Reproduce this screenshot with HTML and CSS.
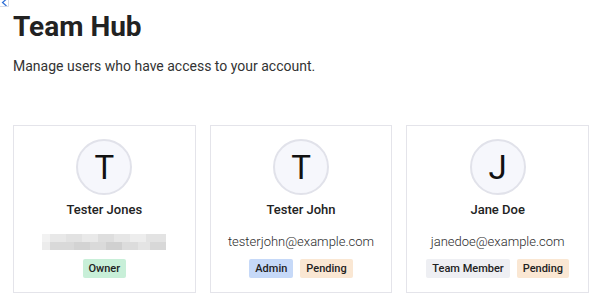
FILE: index.html
```html
<!DOCTYPE html>
<html lang="en">
<head>
  <meta charset="UTF-8">
  <meta name="viewport" content="width=device-width, initial-scale=1.0">
  <title>Team Hub</title>
  <link rel="stylesheet" href="styles.css">
</head>
<body>
  <!-- corner of a broken image, mostly scrolled out of view -->
  <svg class="corner-icon" width="10" height="7" viewBox="0 0 10 7" aria-hidden="true">
    <path d="M6.5 -1 L2.5 2.5 L6.5 6" fill="none" stroke="#2f6fd6" stroke-width="1.2"/>
    <path d="M0 6.5 H8.5 V0" fill="none" stroke="#d6dbe6" stroke-width="1"/>
  </svg>

  <div class="page">
    <h1>Team Hub</h1>
    <p class="subtitle">Manage users who have access to your account.</p>

    <div class="members">
      <!-- Owner -->
      <div class="member-card">
        <div class="avatar">T</div>
        <div class="member-name">Tester Jones</div>
        <div class="member-email blurred" aria-label="hidden email"></div>
        <div class="badges">
          <span class="badge badge-owner">Owner</span>
        </div>
      </div>

      <div class="member-card">
        <div class="avatar">T</div>
        <div class="member-name">Tester John</div>
        <div class="member-email">testerjohn@example.com</div>
        <div class="badges">
          <span class="badge badge-admin">Admin</span>
          <span class="badge badge-pending">Pending</span>
        </div>
      </div>

      <div class="member-card">
        <div class="avatar">J</div>
        <div class="member-name">Jane Doe</div>
        <div class="member-email">janedoe@example.com</div>
        <div class="badges">
          <span class="badge badge-member">Team Member</span>
          <span class="badge badge-pending">Pending</span>
        </div>
      </div>
    </div>
  </div>
</body>
</html>
```

FILE: styles.css
```css
body {
  font-family: Roboto, "Liberation Sans", sans-serif;
  margin: 0;
  padding: 0;
  background-color: #fff;
  color: #222;
}

.corner-icon {
  position: absolute;
  top: 0;
  left: 0;
}

.page {
  padding: 10px 11px 0 13px;
}

h1 {
  margin: 0;
  font-size: 28px;
  line-height: 34px;
  font-weight: 700;
  color: #222;
}

.subtitle {
  margin: 12px 0 0;
  font-size: 14px;
  line-height: 20px;
  color: #333;
}

.members {
  display: grid;
  grid-template-columns: repeat(3, 1fr);
  gap: 14px;
  margin-top: 49px;
}

.member-card {
  display: flex;
  flex-direction: column;
  align-items: center;
  border: 1px solid #e4e4ea;
  padding: 13px 8px 14px;
}

.avatar {
  width: 52px;
  height: 52px;
  border: 2px solid #e1e2ea;
  border-radius: 50%;
  background-color: #f6f7fc;
  display: flex;
  align-items: center;
  justify-content: center;
  font-size: 33px;
  color: #111;
}

.member-name {
  margin-top: 7px;
  font-size: 13px;
  line-height: 16px;
  font-weight: 500;
  color: #222;
}

.member-email {
  margin-top: 14px;
  font-size: 13px;
  line-height: 20px;
  font-weight: 300;
  color: #2a2a2a;
}

.blurred {
  width: 124px;
  height: 16px;
  margin-top: 16px;
  margin-bottom: 2px;
  background:
    linear-gradient(90deg, #f2f2f2 0 8px, #e8e8e8 8px 24px, #e2e2e2 24px 40px, #e9e9e9 40px 56px, #dedede 56px 72px, #e6e6e6 72px 88px, #ededed 88px 104px, #e3e3e3 104px 124px) top / 124px 8px no-repeat,
    linear-gradient(90deg, #ececec 0 8px, #d9d9d9 8px 32px, #d3d3d3 32px 48px, #dadada 48px 64px, #d0d0d0 64px 80px, #dcdcdc 80px 96px, #e4e4e4 96px 108px, #d8d8d8 108px 124px) bottom / 124px 8px no-repeat;
}

.badges {
  display: flex;
  gap: 7px;
  margin-top: 7px;
}

.badge {
  font-size: 11px;
  line-height: 15px;
  font-weight: 500;
  padding: 2px 6px;
  border-radius: 2px;
  color: #222;
}

.badge-owner {
  background-color: #c8efd8;
}

.badge-admin {
  background-color: #c6d9f8;
}

.badge-pending {
  background-color: #fae7d3;
}

.badge-member {
  background-color: #eeeff3;
}
```
